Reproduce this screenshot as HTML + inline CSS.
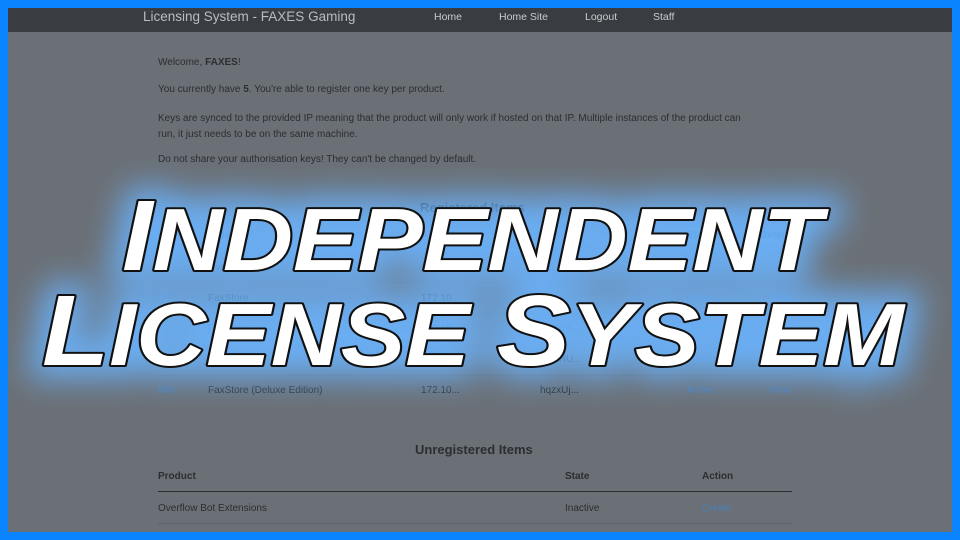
<!DOCTYPE html>
<html><head><meta charset="utf-8"><style>
html,body{margin:0;padding:0;width:960px;height:540px;overflow:hidden;background:#0a84ff;font-family:"Liberation Sans",sans-serif}
#frame{position:absolute;left:8px;top:8px;width:944px;height:524px;background:#6b7076;overflow:hidden}
#bar{position:absolute;left:0;top:0;width:944px;height:24px;background:#393c41}
.t{position:absolute;white-space:nowrap;font-size:10px;color:#2b2e32}
.nav{position:absolute;top:3px;font-size:10.5px;color:#c9cbce}
.b{font-weight:bold}
.blue{color:#4a7fb8}
.hd{font-weight:bold;color:#2b2e32}
.line{position:absolute;height:0;border-top:1px dotted #5f6369}
svg{position:absolute;left:0;top:0}
</style></head><body>
<div id="frame">
<div id="bar">
<div class="nav" style="left:135px;top:1px;font-size:13.5px;color:#b9bcc0">Licensing System - FAXES Gaming</div>
<div class="nav" style="left:426px">Home</div>
<div class="nav" style="left:491px">Home Site</div>
<div class="nav" style="left:577px">Logout</div>
<div class="nav" style="left:645px">Staff</div>
</div>
<div class="t" style="left:150px;top:49px">Welcome, <span class="b">FAXES</span>!</div>
<div class="t" style="left:150px;top:76px">You currently have <span class="b">5</span>. You're able to register one key per product.</div>
<div class="t" style="left:150px;top:103px;line-height:16px">Keys are synced to the provided IP meaning that the product will only work if hosted on that IP. Multiple instances of the product can<br>run, it just needs to be on the same machine.</div>
<div class="t" style="left:150px;top:146px">Do not share your authorisation keys! They can't be changed by default.</div>

<div class="t" style="left:412px;top:192px;font-size:13px;font-weight:bold">Registered Items</div>
<div class="t hd" style="left:150px;top:222px">Id</div>
<div class="t hd" style="left:200px;top:222px">Product</div>
<div class="t hd" style="left:413px;top:222px">Auth IP</div>
<div class="t hd" style="left:532px;top:222px">Key</div>
<div class="t hd" style="left:679px;top:222px">State</div>
<div class="t hd" style="left:752px;top:222px">Details</div>
<div class="line" style="left:150px;top:242px;width:634px;border-top:1px solid #4a7fb8"></div>

<div class="t blue" style="left:150px;top:254px">#1</div><div class="t" style="left:200px;top:254px">Overflow</div><div class="t" style="left:413px;top:254px">172.10...</div><div class="t" style="left:532px;top:254px">sq...</div><div class="t blue" style="left:679px;top:254px">Active</div><div class="t blue" style="left:761px;top:254px">View</div>
<div class="line" style="left:150px;top:274px;width:634px"></div>
<div class="t blue" style="left:150px;top:285px">#2</div><div class="t" style="left:200px;top:285px">FaxStore</div><div class="t" style="left:413px;top:285px">172.10...</div><div class="t" style="left:532px;top:285px">xd...</div><div class="t blue" style="left:679px;top:285px">Active</div><div class="t blue" style="left:761px;top:285px">View</div>
<div class="line" style="left:150px;top:305px;width:634px"></div>
<div class="t blue" style="left:150px;top:315px">#27</div><div class="t" style="left:200px;top:315px">FaxSite</div><div class="t" style="left:413px;top:315px">172.10...</div><div class="t" style="left:532px;top:315px">UOwIX...</div><div class="t blue" style="left:679px;top:315px">Active</div><div class="t blue" style="left:761px;top:315px">View</div>
<div class="line" style="left:150px;top:336px;width:634px"></div>
<div class="t blue" style="left:150px;top:346px">#45</div><div class="t" style="left:200px;top:346px">FaxPanel</div><div class="t" style="left:413px;top:346px">172.10...</div><div class="t" style="left:532px;top:346px">0gGHU...</div><div class="t blue" style="left:679px;top:346px">Active</div><div class="t blue" style="left:761px;top:346px">View</div>
<div class="line" style="left:150px;top:367px;width:634px"></div>
<div class="t blue" style="left:150px;top:377px">#60</div><div class="t" style="left:200px;top:377px">FaxStore (Deluxe Edition)</div><div class="t" style="left:413px;top:377px">172.10...</div><div class="t" style="left:532px;top:377px">hqzxUj...</div><div class="t blue" style="left:679px;top:377px">Active</div><div class="t blue" style="left:761px;top:377px">View</div>

<div class="t" style="left:407px;top:434px;font-size:13px;font-weight:bold">Unregistered Items</div>
<div class="t hd" style="left:150px;top:463px">Product</div>
<div class="t hd" style="left:557px;top:463px">State</div>
<div class="t hd" style="left:694px;top:463px">Action</div>
<div class="line" style="left:150px;top:483px;width:634px;border-top:1px solid #2b2e32"></div>
<div class="t" style="left:150px;top:495px">Overflow Bot Extensions</div>
<div class="t" style="left:557px;top:495px">Inactive</div>
<div class="t blue" style="left:694px;top:495px">Create</div>
<div class="line" style="left:150px;top:515px;width:634px;border-top:1px solid #5f6369"></div>

<svg width="944" height="524" viewBox="8 8 944 524">
<defs><filter id="g" x="-20%" y="-60%" width="140%" height="220%"><feGaussianBlur stdDeviation="16"/></filter></defs>
<g font-family="Liberation Sans, sans-serif" font-weight="bold" font-style="italic">
<g filter="url(#g)" fill="#6ab4ff" stroke="#6ab4ff" stroke-width="26" opacity="0.9">
<text x="122" y="270" font-size="100" textLength="700" lengthAdjust="spacingAndGlyphs">I<tspan font-size="88">NDEPENDENT</tspan></text>
<text x="42" y="365" font-size="100" textLength="862" lengthAdjust="spacingAndGlyphs">L<tspan font-size="88">ICENSE </tspan>S<tspan font-size="88">YSTEM</tspan></text>
</g>
<g fill="#fff" stroke="#111" stroke-width="4" paint-order="stroke" stroke-linejoin="round">
<text x="122" y="270" font-size="100" textLength="700" lengthAdjust="spacingAndGlyphs">I<tspan font-size="88">NDEPENDENT</tspan></text>
<text x="42" y="365" font-size="100" textLength="862" lengthAdjust="spacingAndGlyphs">L<tspan font-size="88">ICENSE </tspan>S<tspan font-size="88">YSTEM</tspan></text>
</g>
</g>
</svg>
</div>
</body></html>
